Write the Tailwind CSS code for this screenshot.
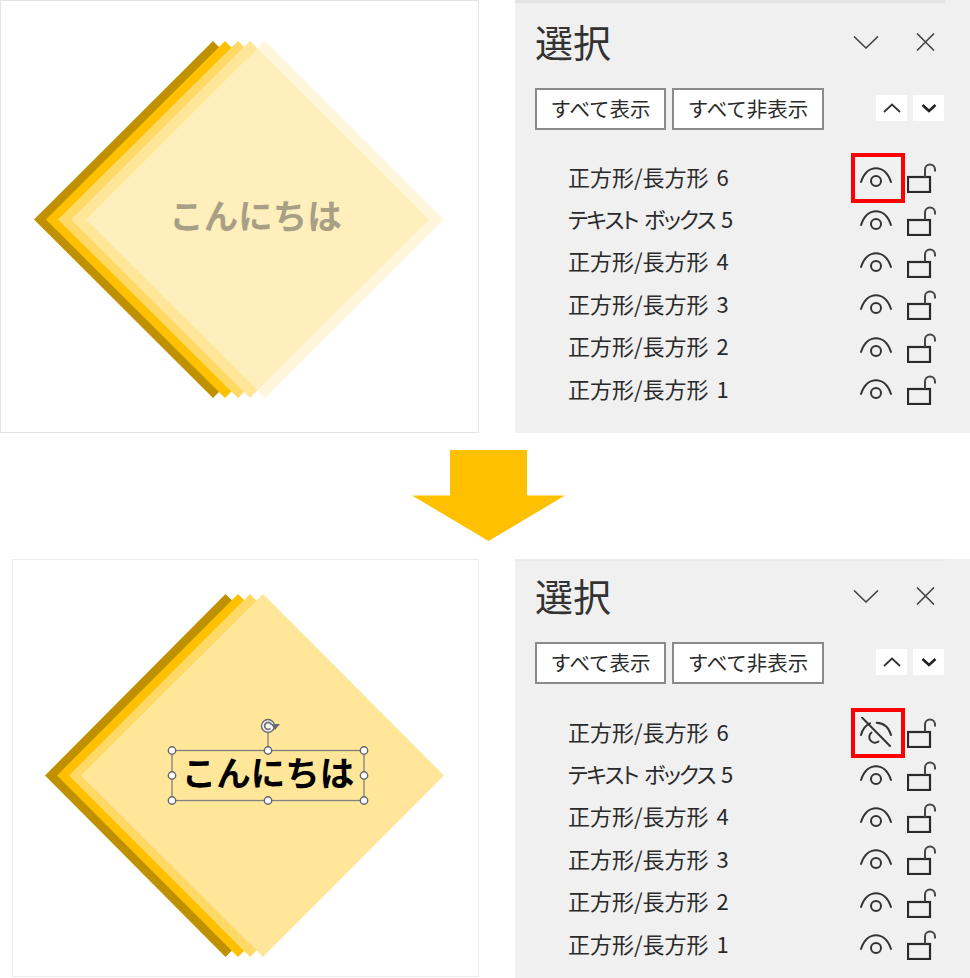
<!DOCTYPE html>
<html>
<head>
    <title>選択</title>
    <script src="https://cdn.jsdelivr.net/npm/@tailwindcss/browser@4"></script>
</head>
<body class="bg-white font-['Noto_Sans_CJK_JP','Noto_Sans',sans-serif]">
<svg class="absolute w-0 h-0">
    <symbol id="eye" viewBox="0 0 32 32">
        <g fill="none" stroke="#333" stroke-width="2" stroke-linecap="round">
            <path d="M1 20 C7 1.5 25 1.5 31 20"/>
            <circle cx="16" cy="19" r="5"/>
        </g>
    </symbol>
    <symbol id="eye-off" viewBox="0 0 32 32">
        <g fill="none" stroke="#333" stroke-width="2" stroke-linecap="round">
            <path d="M2 0.5 L30 29"/>
            <path d="M1 18 C2.5 12 6 8 10 6.3"/>
            <path d="M16.7 5.7 C24 6 29 11 31 18"/>
            <path d="M11.5 15.5 A5.5 5.5 0 0 0 18.5 24.5"/>
        </g>
    </symbol>
    <symbol id="lock" viewBox="0 0 30 30">
        <g fill="none" stroke="#2a2a2a" stroke-width="2.2">
            <rect x="1" y="14" width="22" height="15"/>
            <path d="M18 14 V6.5 A5 5 0 0 1 28 6.5 V8.5" stroke-width="2" stroke="#444"/>
        </g>
    </symbol>
</svg>

<div class="w-[970px] h-[978px] flex flex-col overflow-hidden">

    <!-- before -->
    <div class="flex h-[433px] shrink-0">
        <svg class="w-[479px] h-[433px] shrink-0" viewBox="0 0 479 433">
            <rect x="0.5" y="0.5" width="478" height="432" fill="#fff" stroke="#e4e4e4"/>
            <polygon points="213,41 391,219.5 213,398 34,219.5" fill="#bf9000"/>
            <polygon points="225,41 403,219.5 225,398 46,219.5" fill="#ffc000"/>
            <polygon points="238,41 416,219.5 238,398 58,219.5" fill="#ffd966"/>
            <polygon points="250,41 429,219.5 250,398 71,219.5" fill="#ffe699"/>
            <polygon points="265,41 444,219.5 265,398 86,219.5" fill="#fff2cc" fill-opacity="0.7"/>
            <text x="255.5" y="229" text-anchor="middle" font-size="34.5" font-weight="700" fill="#a8a085" font-family="'Noto Sans CJK JP',sans-serif">こんにちは</text>
        </svg>
        <div class="ml-[36px] w-[455px] bg-[#f0f0f0] relative">
            <div class="absolute left-0 top-0 w-[430px] h-[3px] bg-[#e4e4e4]"></div>
            <div class="flex items-start h-[88px] pl-[20px] pr-[35px]">
                <div class="mt-[22px] text-[38px] leading-none text-[#333]">選択</div>
                <svg class="ml-auto mt-[36px] w-[26px] h-[13px]" viewBox="0 0 26 13" fill="none" stroke="#444" stroke-width="1.6"><path d="M1 0.5 L13 12 L25 0.5"/></svg>
                <svg class="ml-[37px] mt-[33px] w-[19px] h-[18px]" viewBox="0 0 19 18" fill="none" stroke="#444" stroke-width="1.6"><path d="M1 0.5 L18 17.5 M18 0.5 L1 17.5"/></svg>
            </div>
            <div class="flex items-center pl-[20px] h-[42px]">
                <div class="w-[131px] h-[42px] pb-[2px] bg-white border-2 border-[#8a8a8a] flex items-center justify-center text-[20.5px] text-[#2a2a2a]">すべて表示</div>
                <div class="ml-[6px] w-[152px] h-[42px] pb-[2px] bg-white border-2 border-[#8a8a8a] flex items-center justify-center text-[20.5px] text-[#2a2a2a]">すべて非表示</div>
                <div class="ml-[52px] mb-[2px] w-[31px] h-[26px] bg-white flex items-center justify-center">
                    <svg class="w-[18px] h-[10px]" viewBox="0 0 18 10" fill="none" stroke="#333" stroke-width="1.8"><path d="M1 9 L9 1.5 L17 9"/></svg>
                </div>
                <div class="ml-[6px] mb-[2px] w-[31px] h-[26px] bg-white flex items-center justify-center">
                    <svg class="w-[16px] h-[9px]" viewBox="0 0 16 9" fill="none" stroke="#222" stroke-width="2.6"><path d="M1.5 1 L8 7 L14.5 1"/></svg>
                </div>
            </div>
            <div class="mt-[27px] flex flex-col">
                <div class="relative flex items-center h-[42.4px] pl-[53px] pr-[33px]">
                    <span class="mb-[4px] text-[22px] [word-spacing:3px] text-[#2a2a2a]">正方形/長方形 6</span>
                    <svg class="ml-auto w-[32px] h-[32px]"><use href="#eye"/></svg>
                    <svg class="ml-[15px] w-[30px] h-[30px]"><use href="#lock"/></svg>
                    <div class="absolute left-[336px] top-[-4px] w-[54px] h-[50px] border-[4px] border-[#ff0000]"></div>
                </div>
                <div class="flex items-center h-[42.4px] pl-[53px] pr-[33px]">
                    <span class="mb-[4px] text-[22px] [font-feature-settings:'palt'] [word-spacing:3px] tracking-[-1.7px] text-[#2a2a2a]">テキスト ボックス 5</span>
                    <svg class="ml-auto w-[32px] h-[32px]"><use href="#eye"/></svg>
                    <svg class="ml-[15px] w-[30px] h-[30px]"><use href="#lock"/></svg>
                </div>
                <div class="flex items-center h-[42.4px] pl-[53px] pr-[33px]">
                    <span class="mb-[4px] text-[22px] [word-spacing:3px] text-[#2a2a2a]">正方形/長方形 4</span>
                    <svg class="ml-auto w-[32px] h-[32px]"><use href="#eye"/></svg>
                    <svg class="ml-[15px] w-[30px] h-[30px]"><use href="#lock"/></svg>
                </div>
                <div class="flex items-center h-[42.4px] pl-[53px] pr-[33px]">
                    <span class="mb-[4px] text-[22px] [word-spacing:3px] text-[#2a2a2a]">正方形/長方形 3</span>
                    <svg class="ml-auto w-[32px] h-[32px]"><use href="#eye"/></svg>
                    <svg class="ml-[15px] w-[30px] h-[30px]"><use href="#lock"/></svg>
                </div>
                <div class="flex items-center h-[42.4px] pl-[53px] pr-[33px]">
                    <span class="mb-[4px] text-[22px] [word-spacing:3px] text-[#2a2a2a]">正方形/長方形 2</span>
                    <svg class="ml-auto w-[32px] h-[32px]"><use href="#eye"/></svg>
                    <svg class="ml-[15px] w-[30px] h-[30px]"><use href="#lock"/></svg>
                </div>
                <div class="flex items-center h-[42.4px] pl-[53px] pr-[33px]">
                    <span class="mb-[4px] text-[22px] [word-spacing:3px] text-[#2a2a2a]">正方形/長方形 1</span>
                    <svg class="ml-auto w-[32px] h-[32px]"><use href="#eye"/></svg>
                    <svg class="ml-[15px] w-[30px] h-[30px]"><use href="#lock"/></svg>
                </div>
            </div>
        </div>
    </div>

    <!-- arrow -->
    <svg class="w-[970px] h-[126px] shrink-0" viewBox="0 433 970 126">
        <polygon points="450,450 527,450 527,495.5 565,495.5 488.5,541 412,495.5 450,495.5" fill="#ffc000"/>
    </svg>

    <!-- after -->
    <div class="flex h-[419px] shrink-0">
        <svg class="ml-[12px] w-[467px] h-[419px] shrink-0" viewBox="12 559 467 419">
            <rect x="12.5" y="559.5" width="466" height="417" fill="#fff" stroke="#ececec"/>
            <polygon points="225.5,594 407,775.5 225.5,957 45,775.5" fill="#bf9000"/>
            <polygon points="238,594 419,775.5 238,957 57,775.5" fill="#ffc000"/>
            <polygon points="250,594 431,775.5 250,957 69,775.5" fill="#ffd966"/>
            <polygon points="263,594 444,775.5 263,957 81,775.5" fill="#ffe699"/>
            <g fill="none" stroke="#808080" stroke-width="1.3">
                <rect x="172" y="750.5" width="192" height="50"/>
                <path d="M268 733 V750"/>
            </g>
            <g fill="#fff" stroke="#5f6470" stroke-width="1.4">
                <circle cx="172" cy="750.5" r="3.7"/>
                <circle cx="268" cy="750.5" r="3.7"/>
                <circle cx="364" cy="750.5" r="3.7"/>
                <circle cx="172" cy="775.5" r="3.7"/>
                <circle cx="364" cy="775.5" r="3.7"/>
                <circle cx="172" cy="800.5" r="3.7"/>
                <circle cx="268" cy="800.5" r="3.7"/>
                <circle cx="364" cy="800.5" r="3.7"/>
            </g>
            <g fill="none">
                <circle cx="268" cy="726" r="6.5" fill="#f6f6f6" stroke="#6a6a70" stroke-width="1.4"/>
                <path d="M270.5 728.5 A3.5 3.5 0 1 1 271.5 725" stroke="#6a6a70" stroke-width="1.6"/>
                <polygon points="271,724 280,724 275,730" fill="#6a6a70"/>
            </g>
            <text x="268" y="786" text-anchor="middle" font-size="34.5" font-weight="700" fill="#000" font-family="'Noto Sans CJK JP',sans-serif">こんにちは</text>
        </svg>
        <div class="ml-[36px] w-[455px] bg-[#f0f0f0] relative">
            <div class="absolute left-0 top-0 w-[430px] h-[2px] bg-[#ebebeb]"></div>
            <div class="flex items-start h-[83px] pl-[20px] pr-[35px]">
                <div class="mt-[17px] text-[38px] leading-none text-[#333]">選択</div>
                <svg class="ml-auto mt-[31px] w-[26px] h-[13px]" viewBox="0 0 26 13" fill="none" stroke="#444" stroke-width="1.6"><path d="M1 0.5 L13 12 L25 0.5"/></svg>
                <svg class="ml-[37px] mt-[28px] w-[19px] h-[18px]" viewBox="0 0 19 18" fill="none" stroke="#444" stroke-width="1.6"><path d="M1 0.5 L18 17.5 M18 0.5 L1 17.5"/></svg>
            </div>
            <div class="flex items-center pl-[20px] h-[42px]">
                <div class="w-[131px] h-[42px] pb-[2px] bg-white border-2 border-[#8a8a8a] flex items-center justify-center text-[20.5px] text-[#2a2a2a]">すべて表示</div>
                <div class="ml-[6px] w-[152px] h-[42px] pb-[2px] bg-white border-2 border-[#8a8a8a] flex items-center justify-center text-[20.5px] text-[#2a2a2a]">すべて非表示</div>
                <div class="ml-[52px] mb-[2px] w-[31px] h-[26px] bg-white flex items-center justify-center">
                    <svg class="w-[18px] h-[10px]" viewBox="0 0 18 10" fill="none" stroke="#333" stroke-width="1.8"><path d="M1 9 L9 1.5 L17 9"/></svg>
                </div>
                <div class="ml-[6px] mb-[2px] w-[31px] h-[26px] bg-white flex items-center justify-center">
                    <svg class="w-[16px] h-[9px]" viewBox="0 0 16 9" fill="none" stroke="#222" stroke-width="2.6"><path d="M1.5 1 L8 7 L14.5 1"/></svg>
                </div>
            </div>
            <div class="mt-[28px] flex flex-col">
                <div class="relative flex items-center h-[42.4px] pl-[53px] pr-[33px]">
                    <span class="mb-[4px] text-[22px] [word-spacing:3px] text-[#2a2a2a]">正方形/長方形 6</span>
                    <svg class="ml-auto w-[32px] h-[32px]"><use href="#eye-off"/></svg>
                    <svg class="ml-[15px] w-[30px] h-[30px]"><use href="#lock"/></svg>
                    <div class="absolute left-[336px] top-[-4px] w-[54px] h-[50px] border-[4px] border-[#ff0000]"></div>
                </div>
                <div class="flex items-center h-[42.4px] pl-[53px] pr-[33px]">
                    <span class="mb-[4px] text-[22px] [font-feature-settings:'palt'] [word-spacing:3px] tracking-[-1.7px] text-[#2a2a2a]">テキスト ボックス 5</span>
                    <svg class="ml-auto w-[32px] h-[32px]"><use href="#eye"/></svg>
                    <svg class="ml-[15px] w-[30px] h-[30px]"><use href="#lock"/></svg>
                </div>
                <div class="flex items-center h-[42.4px] pl-[53px] pr-[33px]">
                    <span class="mb-[4px] text-[22px] [word-spacing:3px] text-[#2a2a2a]">正方形/長方形 4</span>
                    <svg class="ml-auto w-[32px] h-[32px]"><use href="#eye"/></svg>
                    <svg class="ml-[15px] w-[30px] h-[30px]"><use href="#lock"/></svg>
                </div>
                <div class="flex items-center h-[42.4px] pl-[53px] pr-[33px]">
                    <span class="mb-[4px] text-[22px] [word-spacing:3px] text-[#2a2a2a]">正方形/長方形 3</span>
                    <svg class="ml-auto w-[32px] h-[32px]"><use href="#eye"/></svg>
                    <svg class="ml-[15px] w-[30px] h-[30px]"><use href="#lock"/></svg>
                </div>
                <div class="flex items-center h-[42.4px] pl-[53px] pr-[33px]">
                    <span class="mb-[4px] text-[22px] [word-spacing:3px] text-[#2a2a2a]">正方形/長方形 2</span>
                    <svg class="ml-auto w-[32px] h-[32px]"><use href="#eye"/></svg>
                    <svg class="ml-[15px] w-[30px] h-[30px]"><use href="#lock"/></svg>
                </div>
                <div class="flex items-center h-[42.4px] pl-[53px] pr-[33px]">
                    <span class="mb-[4px] text-[22px] [word-spacing:3px] text-[#2a2a2a]">正方形/長方形 1</span>
                    <svg class="ml-auto w-[32px] h-[32px]"><use href="#eye"/></svg>
                    <svg class="ml-[15px] w-[30px] h-[30px]"><use href="#lock"/></svg>
                </div>
            </div>
        </div>
    </div>
</div>
</body>
</html>
